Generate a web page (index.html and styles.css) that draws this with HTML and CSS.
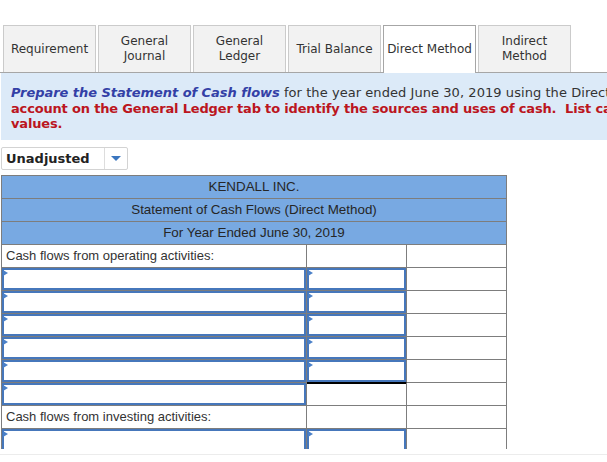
FILE: index.html
```html
<!DOCTYPE html>
<html lang="en">
<head>
<meta charset="utf-8">
<title>Direct Method</title>
<link rel="stylesheet" href="styles.css">
</head>
<body>
<div class="tabs">
  <div class="tab">Requirement</div>
  <div class="tab">General<br>Journal</div>
  <div class="tab">General<br>Ledger</div>
  <div class="tab">Trial Balance</div>
  <div class="tab active">Direct Method</div>
  <div class="tab">Indirect<br>Method</div>
</div>
<div class="band">
  <p class="instr"><em class="lead">Prepare the Statement of Cash flows</em> for the year ended June 30, 2019 using the Direct Method. <strong class="red">(Use the Cash</strong><br><strong class="red">account on the General Ledger tab to identify the sources and uses of cash.&nbsp; List cash outflows as negative</strong><br><strong class="red">values.</strong></p>
</div>
<div class="select">
  <span class="select-text">Unadjusted</span>
  <span class="select-arrow"><span class="tri-down"></span></span>
</div>
<div class="sheet-wrap">
  <div class="sheet">
    <div class="hcell">KENDALL INC.</div>
    <div class="hcell">Statement of Cash Flows (Direct Method)</div>
    <div class="hcell">For Year Ended June 30, 2019</div>

    <div class="cell label">Cash flows from operating activities:</div>
    <div class="cell"></div>
    <div class="cell"></div>

    <div class="cell"><div class="inp"><span class="tri"></span></div></div>
    <div class="cell"><div class="inp"><span class="tri"></span></div></div>
    <div class="cell"></div>

    <div class="cell"><div class="inp"><span class="tri"></span></div></div>
    <div class="cell"><div class="inp"><span class="tri"></span></div></div>
    <div class="cell"></div>

    <div class="cell"><div class="inp"><span class="tri"></span></div></div>
    <div class="cell"><div class="inp"><span class="tri"></span></div></div>
    <div class="cell"></div>

    <div class="cell"><div class="inp"><span class="tri"></span></div></div>
    <div class="cell"><div class="inp"><span class="tri"></span></div></div>
    <div class="cell"></div>

    <div class="cell"><div class="inp"><span class="tri"></span></div></div>
    <div class="cell total-above"><div class="inp"><span class="tri"></span></div></div>
    <div class="cell"></div>

    <div class="cell"><div class="inp"><span class="tri"></span></div></div>
    <div class="cell total"></div>
    <div class="cell"></div>

    <div class="cell label">Cash flows from investing activities:</div>
    <div class="cell"></div>
    <div class="cell"></div>

    <div class="cell"><div class="inp"><span class="tri"></span></div></div>
    <div class="cell"><div class="inp"><span class="tri"></span></div></div>
    <div class="cell"></div>
  </div>
</div>
<div class="foot-line"></div>
</body>
</html>
```
FILE: styles.css
```css
html, body {
  margin: 0;
  padding: 0;
  background: #ffffff;
  overflow: hidden;
}

body {
  font-family: "DejaVu Sans", Verdana, sans-serif;
  color: #333333;
}

.tabs {
  display: flex;
  align-items: flex-end;
  gap: 2px;
  padding: 25px 0 0 3px;
  border-bottom: 1px solid #a6a6a6;
}

.tab {
  box-sizing: border-box;
  width: 93px;
  height: 47px;
  display: flex;
  align-items: center;
  justify-content: center;
  text-align: center;
  font-size: 12px;
  line-height: 15px;
  color: #333333;
  background: #f2f2f2;
  border: 1px solid #cbcbcb;
  border-bottom: none;
}

.tab.active {
  background: #ffffff;
  border-color: #a6a6a6;
  height: 48px;
  margin-bottom: -1px;
}

.band {
  margin-left: 1px;
  background: #dceaf8;
  padding: 12px 10px 8px;
  overflow: hidden;
}

.instr {
  margin: 0;
  white-space: nowrap;
  font-size: 13px;
  line-height: 15.5px;
  color: #333333;
  letter-spacing: 0.06px;
}

.lead {
  font-weight: bold;
  font-style: italic;
  color: #3340a6;
  letter-spacing: -0.05px;
}

.red {
  font-weight: bold;
  color: #bb1520;
  letter-spacing: -0.17px;
}

.select {
  box-sizing: border-box;
  display: flex;
  width: 127px;
  height: 23px;
  margin: 7px 0 0 1px;
  border: 1px solid #d3d3d3;
  border-radius: 2px;
  background: #ffffff;
}

.select-text {
  box-sizing: border-box;
  width: 103px;
  padding-left: 4px;
  font-size: 13px;
  font-weight: bold;
  line-height: 21px;
  color: #222222;
  border-right: 1px solid #dddddd;
}

.select-arrow {
  flex: 1;
  display: flex;
  align-items: center;
  justify-content: center;
}

.tri-down {
  width: 0;
  height: 0;
  border-left: 5px solid transparent;
  border-right: 5px solid transparent;
  border-top: 5px solid #3b76bf;
}

.sheet-wrap {
  margin: 5px 0 0 1px;
  height: 274px;
  overflow: hidden;
}

.sheet {
  display: grid;
  grid-template-columns: 305px 100px 100px;
  width: max-content;
  border-top: 1px solid #7d7d7d;
  border-left: 1px solid #7d7d7d;
  font-family: "Liberation Sans", Arial, sans-serif;
  font-size: 13px;
  color: #333333;
}

.hcell {
  grid-column: 1 / -1;
  box-sizing: border-box;
  height: 23px;
  line-height: 22px;
  font-size: 13.4px;
  text-align: center;
  background: #78a9e2;
  color: #262626;
  border-right: 1px solid #7d7d7d;
  border-bottom: 1px solid #7d7d7d;
}

.cell {
  box-sizing: border-box;
  height: 23px;
  border-right: 1px solid #7d7d7d;
  border-bottom: 1px solid #7d7d7d;
  display: flex;
}

.cell.label {
  padding-left: 4px;
  line-height: 22px;
  color: #333333;
}

.cell.total-above {
  border-bottom-color: #000000;
}

.cell.total {
  box-shadow: inset 0 1px 0 #000000;
}

.inp {
  box-sizing: border-box;
  flex: 1;
  border: 2px solid #4677bb;
  background: #ffffff;
}

.tri {
  display: block;
  width: 0;
  height: 0;
  margin: 0 0 0 -1px;
  border-left: 5px solid #4a80c8;
  border-top: 3px solid transparent;
  border-bottom: 3px solid transparent;
}

.foot-line {
  margin-top: 5px;
  border-top: 1px solid #ececec;
}
```
